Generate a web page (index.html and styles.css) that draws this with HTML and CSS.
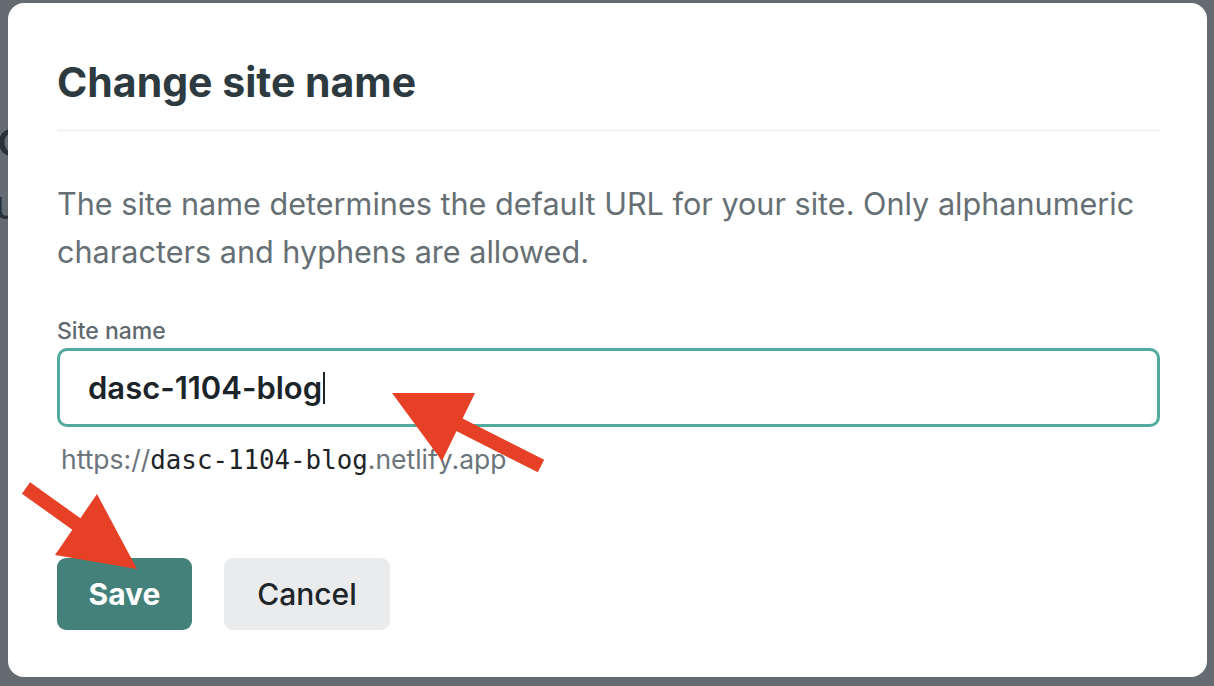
FILE: index.html
```html
<!DOCTYPE html>
<html lang="en">
<head>
<meta charset="utf-8">
<title>Change site name</title>
<link rel="stylesheet" href="styles.css">
</head>
<body>
<div class="page">
  <div class="page-left">
    <div class="page-title">Co</div>
    <div class="page-sub">ur</div>
  </div>
  <div class="page-right">
    <div class="page-r1">e</div>
    <div class="page-r2">r</div>
  </div>
</div>

<div class="overlay">
  <div class="modal">
    <h1 class="modal-title">Change site name</h1>
    <p class="modal-desc">The site name determines the default URL for your site. Only alphanumeric characters and hyphens are allowed.</p>
    <label class="field-label" for="site">Site name</label>
    <div class="field-input"><span class="input-text">dasc-1104-blog</span><span class="caret"></span></div>
    <div class="field-hint">https://<span class="mono">dasc-1104-blog</span>.netlify.app</div>
    <div class="actions">
      <button class="btn btn-primary">Save</button>
      <button class="btn btn-secondary">Cancel</button>
    </div>
  </div>
  <svg class="annotations" width="1214" height="686" viewBox="0 0 1214 686">
    <g fill="#e64126" stroke="none">
      <line x1="452" y1="421" x2="541" y2="466" stroke="#e64126" stroke-width="14"/>
      <polygon points="392,393 475,393 442,461"/>
      <line x1="26" y1="488" x2="82" y2="528" stroke="#e64126" stroke-width="14"/>
      <polygon points="55,555 97,494 137,569"/>
    </g>
  </svg>
</div>
</body>
</html>
```

FILE: styles.css
```css
* { box-sizing: border-box; }
html, body { margin: 0; padding: 0; }
body {
  width: 1214px;
  height: 686px;
  overflow: hidden;
  background: #646c71;
  font-family: Inter, "Noto Sans", sans-serif;
}
.page {
  display: flex;
  justify-content: space-between;
  height: 686px;
  color: #27323a;
}
.page-left { margin-left: -40px; padding-top: 108px; }
.page-title { font-size: 50px; font-weight: 500; line-height: 60px; }
.page-sub { margin-left: 35px; font-size: 40px; line-height: 50px; margin-top: 12px; }
.page-right { margin-right: -22px; padding-top: 466px; }
.page-r1 { font-size: 30px; font-weight: 700; line-height: 40px; }
.page-r2 { font-size: 30px; line-height: 40px; margin-top: 8px; }

.overlay {
  position: fixed;
  inset: 0;
}
.modal {
  margin: 3px 7px 0 8px;
  height: 674px;
  background: #fff;
  border-radius: 16px;
  padding: 0 47px 0 49px;
  display: flex;
  flex-direction: column;
}
.modal-title {
  margin: 53px 0 0;
  font-size: 41px;
  font-weight: 700;
  line-height: 52px;
  color: #2d3a40;
  padding-bottom: 21px;
  border-bottom: 3px solid #f4f6f6;
}
.modal-desc {
  margin: 48px 0 0;
  font-size: 30.6px;
  line-height: 48px;
  color: #656f74;
}
.field-label {
  margin-top: 42px;
  font-size: 23px;
  font-weight: 500;
  line-height: 26px;
  color: #5f6a70;
}
.field-input {
  margin-top: 4px;
  height: 79px;
  border: 3px solid #52aa9f;
  border-radius: 10px;
  padding: 0 28px;
  display: flex;
  align-items: center;
}
.input-text {
  font-size: 31px;
  font-weight: 600;
  color: #1b2429;
}
.caret {
  display: inline-block;
  width: 2px;
  height: 32px;
  background: #1b2429;
  margin-left: 1px;
}
.field-hint {
  margin: 14px 0 0 4px;
  font-size: 26.5px;
  line-height: 36px;
  color: #6b757b;
}
.mono {
  font-family: "DejaVu Sans Mono", monospace;
  font-size: 25.8px;
  color: #1d2327;
}
.actions {
  margin-top: 80px;
  display: flex;
  gap: 32px;
}
.btn {
  height: 72px;
  border: none;
  border-radius: 9px;
  font-family: Inter, "Noto Sans", sans-serif;
  font-size: 30px;
  padding: 0;
}
.btn-primary {
  width: 135px;
  background: #43817a;
  color: #fff;
  font-weight: 700;
}
.btn-secondary {
  width: 166px;
  background: #e9ebed;
  color: #1d2529;
  font-weight: 500;
}
.annotations {
  position: absolute;
  left: 0;
  top: 0;
  pointer-events: none;
}
```
